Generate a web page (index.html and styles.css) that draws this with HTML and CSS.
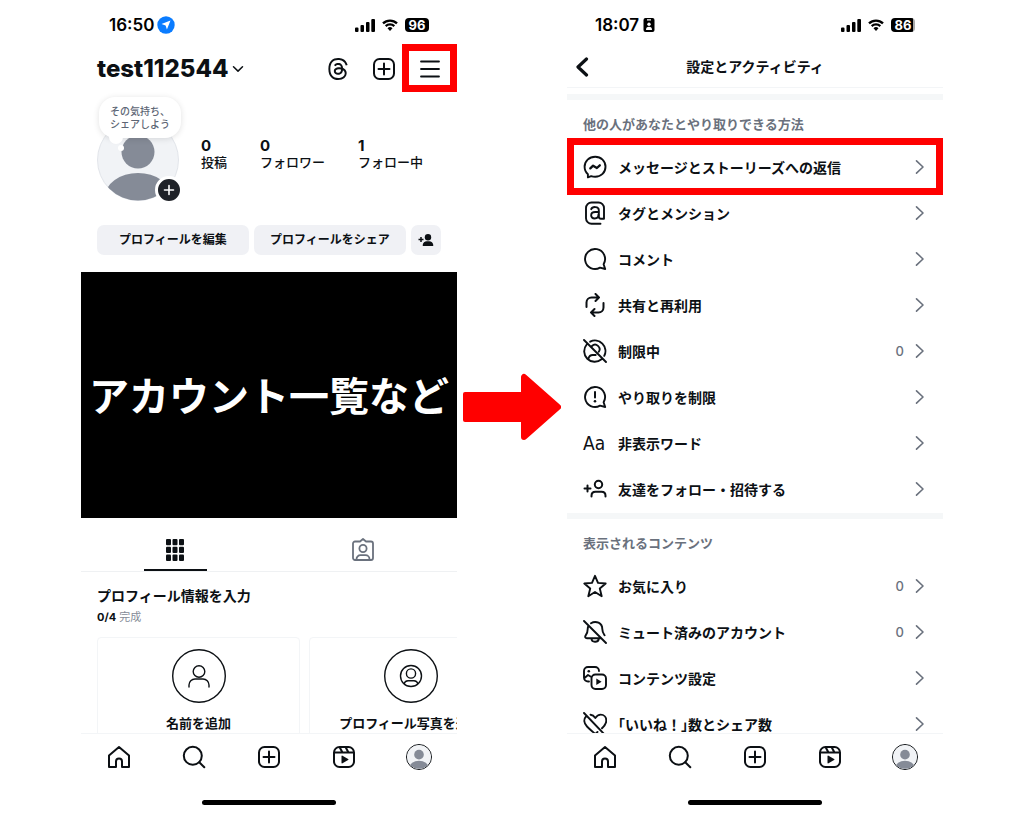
FILE: index.html
```html
<!DOCTYPE html>
<html lang="ja">
<head>
    <meta charset="UTF-8">
    <meta name="viewport" content="width=device-width, initial-scale=1.0">
    <title>設定とアクティビティ</title>
    <link rel="stylesheet" href="styles.css">
</head>
<body>
    <svg class="sprite" aria-hidden="true">
        <symbol id="signal" viewBox="0 0 20 13"><path fill="currentColor" d="M0 9.5a1 1 0 0 1 1-1h1.5a1 1 0 0 1 1 1V12a1 1 0 0 1-1 1H1a1 1 0 0 1-1-1zM5.500 7a1 1 0 0 1 1-1H8a1 1 0 0 1 1 1v5a1 1 0 0 1-1 1H6.500a1 1 0 0 1-1-1zM11 4a1 1 0 0 1 1-1h1.500a1 1 0 0 1 1 1v8a1 1 0 0 1-1 1H12a1 1 0 0 1-1-1zM16.300 1a1 1 0 0 1 1-1H19a1 1 0 0 1 1 1v11a1 1 0 0 1-1 1h-1.700a1 1 0 0 1-1-1z"/></symbol>
        <symbol id="wifi" viewBox="0 0 16 12"><g fill="none" stroke="currentColor" stroke-width="2.300"><path d="M1 4.400a10 10 0 0 1 14 0M3.700 7.200a6.200 6.200 0 0 1 8.600 0"/></g><path fill="currentColor" d="M8 11.900 5.500 9.300a3.600 3.600 0 0 1 5 0z"/></symbol>
        <symbol id="plus-box" viewBox="0 0 24 24"><g fill="none" stroke="currentColor" stroke-width="2" stroke-linecap="round"><rect x="2" y="2" width="20" height="20" rx="5.500"/><path d="M12 6.500v11M6.500 12h11"/></g></symbol>
        <symbol id="home" viewBox="0 0 24 24"><path fill="none" stroke="currentColor" stroke-width="2" stroke-linejoin="round" d="M9 22v-5.500a3 3 0 0 1 6 0V22h7V10.500L12 2 2 10.500V22z"/></symbol>
        <symbol id="search" viewBox="0 0 24 24"><g fill="none" stroke="currentColor" stroke-width="2" stroke-linecap="round"><circle cx="10.800" cy="10.800" r="9"/><path d="m17.300 17.300 5 5"/></g></symbol>
        <symbol id="reels" viewBox="0 0 24 24"><g fill="none" stroke="currentColor" stroke-width="2" stroke-linejoin="round"><rect x="2" y="2" width="20" height="20" rx="5.500"/><path d="M2 7.500h20M7.500 2l3 5.500M13.500 2l3 5.500"/></g><path fill="currentColor" d="M9.500 11.300v6.400a.7.7 0 0 0 1 .6l5.600-3.200a.7.7 0 0 0 0-1.200l-5.600-3.200a.7.7 0 0 0-1 .6z"/></symbol>
        <symbol id="avatar" viewBox="0 0 82 82"><clipPath id="avatar-clip"><circle cx="41" cy="41" r="40.500"/></clipPath><circle cx="41" cy="41" r="40.500" fill="#f1f3f6" stroke="#e2e5ea"/><g fill="#858b97" clip-path="url(#avatar-clip)"><circle cx="41" cy="33" r="16.500"/><ellipse cx="41" cy="78" rx="33" ry="24"/></g></symbol>
        <symbol id="chevron" viewBox="0 0 10 16"><path fill="none" stroke="currentColor" stroke-width="1.600" stroke-linecap="round" stroke-linejoin="round" d="m1.500 1.800 6.500 6.200-6.500 6.200"/></symbol>
    </svg>

    <main class="guide">
        <section class="phone">
            <div class="status">
                <span class="clock">16:50</span>
                <svg class="location" viewBox="0 0 18 18"><circle cx="9" cy="9" r="8.700" fill="#0a7cff"/><path fill="#fff" d="m13.500 4.500-3.600 9-1.300-4.100-4.100-1.300z"/></svg>
                <svg class="signal"><use href="#signal"/></svg>
                <svg class="wifi"><use href="#wifi"/></svg>
                <span class="battery">96</span>
            </div>
            <header class="profile-bar">
                <h1 class="username">test112544</h1>
                <svg class="down" viewBox="0 0 12 8"><path fill="none" stroke="currentColor" stroke-width="1.500" stroke-linecap="round" stroke-linejoin="round" d="m1.500 1.800 4.500 4.300 4.500-4.300"/></svg>
                <button class="icon-button" aria-label="Threads"><svg class="threads" viewBox="0 0 16 16"><path fill="currentColor" d="M6.321 6.016c-.27-.18-1.166-.802-1.166-.802.756-1.081 1.753-1.502 3.132-1.502.975 0 1.803.327 2.394.948s.928 1.509 1.005 2.644q.492.207.905.484c1.109.745 1.719 1.860 1.719 3.137 0 2.716-2.226 5.075-6.256 5.075C4.594 16 1 13.987 1 7.994 1 2.034 4.482 0 8.044 0 9.690 0 13.550.243 15 5.036l-1.360.353C12.516 1.974 10.163 1.430 8.006 1.430c-3.565 0-5.582 2.171-5.582 6.790 0 4.143 2.254 6.343 5.630 6.343 2.777 0 4.847-1.443 4.847-3.556 0-1.438-1.208-2.127-1.270-2.127-.236 1.234-.868 3.310-3.644 3.310-1.618 0-3.013-1.118-3.013-2.582 0-2.090 1.984-2.847 3.550-2.847.586 0 1.294.040 1.663.114 0-.637-.540-1.728-1.900-1.728-1.250 0-1.566.405-1.967.868ZM8.716 8.190c-2.040 0-2.304.870-2.304 1.416 0 .878 1.043 1.168 1.600 1.168 1.020 0 2.067-.282 2.232-2.423a6.200 6.200 0 0 0-1.528-.161"/></svg></button>
                <button class="icon-button" aria-label="作成"><svg class="icon"><use href="#plus-box"/></svg></button>
                <button class="icon-button menu" aria-label="メニュー"><svg class="icon" viewBox="0 0 24 24"><path fill="none" stroke="currentColor" stroke-width="1.800" stroke-linecap="round" d="M3 4.500h18M3 12h18M3 19.500h18"/></svg></button>
            </header>

            <div class="profile">
                <div class="summary">
                    <div class="photo">
                        <svg class="avatar"><use href="#avatar"/></svg>
                        <p class="note">その気持ち、<br>シェアしよう</p>
                        <button class="add" aria-label="ストーリーズを追加"><svg viewBox="0 0 12 12"><path stroke="currentColor" stroke-width="1.600" stroke-linecap="round" d="M6 1.500v9M1.500 6h9"/></svg></button>
                    </div>
                    <ul class="stats">
                        <li><b>0</b>投稿</li>
                        <li><b>0</b>フォロワー</li>
                        <li><b>1</b>フォロー中</li>
                    </ul>
                </div>
                <div class="actions">
                    <button class="action">プロフィールを編集</button>
                    <button class="action">プロフィールをシェア</button>
                    <button class="action small" aria-label="友達を探す"><svg viewBox="0 0 16 14"><path fill="currentColor" d="M5.500 13c-.6 0-.9-.4-.8-1 .3-2.300 1.800-3.700 4.200-3.700h2.200c2.400 0 3.900 1.400 4.200 3.700.1.600-.2 1-.8 1z"/><circle cx="10" cy="4.200" r="3.200" fill="currentColor"/><path stroke="currentColor" stroke-width="1.500" d="M3 4v5M.5 6.500h5"/></svg></button>
                </div>
            </div>

            <div class="cover">アカウント一覧など</div>

            <div class="tabs">
                <a class="tab active" href="#" aria-label="投稿"><svg class="icon" viewBox="0 0 24 24"><g fill="currentColor"><rect x="3" y="1" width="5" height="6.300" rx="1"/><rect x="9.500" y="1" width="5" height="6.300" rx="1"/><rect x="16" y="1" width="5" height="6.300" rx="1"/><rect x="3" y="8.800" width="5" height="6.300" rx="1"/><rect x="9.500" y="8.800" width="5" height="6.300" rx="1"/><rect x="16" y="8.800" width="5" height="6.300" rx="1"/><rect x="3" y="16.600" width="5" height="6.300" rx="1"/><rect x="9.500" y="16.600" width="5" height="6.300" rx="1"/><rect x="16" y="16.600" width="5" height="6.300" rx="1"/></g></svg></a>
                <a class="tab" href="#" aria-label="タグ付け"><svg class="icon" viewBox="0 0 24 24"><g fill="none" stroke="currentColor" stroke-width="1.800" stroke-linejoin="round"><path d="M4 3.500h5L12 1l3 2.500h5a2 2 0 0 1 2 2V20a2 2 0 0 1-2 2H4a2 2 0 0 1-2-2V5.500a2 2 0 0 1 2-2z"/><circle cx="12" cy="10.500" r="3.600"/><path d="M5.500 22v-.8a4 4 0 0 1 4-4h5a4 4 0 0 1 4 4v.8"/></g></svg></a>
            </div>

            <div class="setup">
                <h2>プロフィール情報を入力</h2>
                <p class="progress"><b>0/4</b> 完成</p>
                <div class="cards">
                    <article class="card">
                        <svg class="ring" viewBox="0 0 54 54"><g fill="none" stroke="currentColor" stroke-width="1.400" stroke-linecap="round"><circle cx="27" cy="27" r="26.300"/><circle cx="27" cy="22.500" r="5.800"/><path d="M17 38v-2a6 6 0 0 1 6-6h8a6 6 0 0 1 6 6v2"/></g></svg>
                        <h3>名前を追加</h3>
                    </article>
                    <article class="card">
                        <svg class="ring" viewBox="0 0 54 54"><g fill="none" stroke="currentColor" stroke-width="1.400"><circle cx="27" cy="27" r="26.300"/><circle cx="27" cy="27" r="10.500"/><circle cx="27" cy="24.500" r="4.600"/><path d="M20 35c.6-2.300 2-3.300 4-3.300h6c2 0 3.400 1 4 3.300"/></g></svg>
                        <h3>プロフィール写真を追加</h3>
                    </article>
                </div>
            </div>

            <nav class="tabbar">
                <a href="#" aria-label="ホーム"><svg class="icon"><use href="#home"/></svg></a>
                <a href="#" aria-label="検索"><svg class="icon"><use href="#search"/></svg></a>
                <a href="#" aria-label="作成"><svg class="icon"><use href="#plus-box"/></svg></a>
                <a href="#" aria-label="リール"><svg class="icon"><use href="#reels"/></svg></a>
                <a href="#" aria-label="プロフィール"><svg class="me"><use href="#avatar"/></svg></a>
            </nav>
        </section>

        <svg class="arrow" viewBox="0 0 98 68"><path fill="#f00" stroke="#f00" stroke-width="6" stroke-linejoin="round" d="M61 4v60l34-30z"/><rect y="19" width="64" height="30" rx="2" fill="#f00"/></svg>

        <section class="phone">
            <div class="status">
                <span class="clock">18:07</span>
                <svg class="badge" viewBox="0 0 12 16"><rect x=".5" y="1" width="11" height="14" rx="2" fill="currentColor"/><path fill="#fff" d="M4 2.200h4v1.200H4zM3 13c0-2.200 1-3.300 3-3.300s3 1.100 3 3.300z"/><circle cx="6" cy="7.200" r="1.700" fill="#fff"/></svg>
                <svg class="signal"><use href="#signal"/></svg>
                <svg class="wifi"><use href="#wifi"/></svg>
                <span class="battery part">86</span>
            </div>
            <header class="settings-bar">
                <button class="back" aria-label="戻る"><svg viewBox="0 0 14 20"><path fill="none" stroke="currentColor" stroke-width="3.200" stroke-linecap="round" stroke-linejoin="round" d="m11.500 2-8.500 8 8.500 8"/></svg></button>
                <h1>設定とアクティビティ</h1>
            </header>

            <div class="settings">
                <section class="group">
                    <h2>他の人があなたとやり取りできる方法</h2>
                    <a class="row marked" href="#">
                        <svg class="icon" viewBox="0 0 24 24"><g fill="none" stroke="currentColor" stroke-width="1.900" stroke-linejoin="round" stroke-linecap="round"><path d="M12.200 1.800C6.200 1.800 1.600 6 1.600 11.800c0 3 1.200 5.600 3.300 7.400v3.200l3.300-1.300c1.200.4 2.600.6 4 .6 5.900 0 10.300-4.200 10.300-9.900S18.100 1.800 12.200 1.800z"/><path stroke-width="2.300" d="m7.300 13.400 2.800-2.700 3.800 2.300 2.900-2.700"/></g></svg>
                        <span class="name">メッセージとストーリーズへの返信</span>
                        <svg class="chevron"><use href="#chevron"/></svg>
                    </a>
                    <a class="row" href="#">
                        <svg class="icon" viewBox="0 0 24 24"><g fill="none" stroke="currentColor" stroke-width="1.900" stroke-linecap="round" stroke-linejoin="round"><path d="M17.500 22.800H8.500A5.500 5.500 0 0 1 3 17.300V7a5.500 5.500 0 0 1 5.500-5.500h7A5.500 5.500 0 0 1 21 7v10.700h-3c-1.400 0-2.200-.8-2.200-2.200V9c0-3.600-6.400-3.900-7.600-.8"/><path d="M15.500 11h-3.300c-5.300 0-5.300 6.500-.5 6.500 2.300 0 3.800-1.500 3.800-3.700"/></g></svg>
                        <span class="name">タグとメンション</span>
                        <svg class="chevron"><use href="#chevron"/></svg>
                    </a>
                    <a class="row" href="#">
                        <svg class="icon" viewBox="0 0 24 24"><path fill="none" stroke="currentColor" stroke-width="1.900" stroke-linejoin="round" d="M20.600 17.200a10 10 0 1 0-3.600 3.500l5.200 1.300z"/></svg>
                        <span class="name">コメント</span>
                        <svg class="chevron"><use href="#chevron"/></svg>
                    </a>
                    <a class="row" href="#">
                        <svg class="icon" viewBox="0 0 24 24"><g fill="none" stroke="currentColor" stroke-width="2" stroke-linecap="round" stroke-linejoin="round"><path d="M3.500 14V9.500a5 5 0 0 1 5-5H16M12.500 1 16 4.500 12.500 8M20.500 10v4.500a5 5 0 0 1-5 5H8M11.500 23 8 19.500l3.500-3.500"/></g></svg>
                        <span class="name">共有と再利用</span>
                        <svg class="chevron"><use href="#chevron"/></svg>
                    </a>
                    <a class="row" href="#">
                        <svg class="icon" viewBox="0 0 24 24"><g fill="none" stroke="currentColor" stroke-width="1.900" stroke-linecap="round"><path d="M1 1l22 22M7.200 2.700A10.500 10.500 0 0 1 21.300 16.800M18.500 20.300A10.500 10.500 0 0 1 3.700 5.500M9 7a4.500 4.500 0 0 1 6.800 5.800M5.500 19.500c.6-2.500 2-3.500 4.200-3.500h3"/></g></svg>
                        <span class="name">制限中</span>
                        <span class="count">0</span>
                        <svg class="chevron"><use href="#chevron"/></svg>
                    </a>
                    <a class="row" href="#">
                        <svg class="icon" viewBox="0 0 24 24"><path fill="none" stroke="currentColor" stroke-width="1.900" stroke-linejoin="round" d="M20.600 17.200a10 10 0 1 0-3.600 3.500l5.200 1.300z"/><path stroke="currentColor" stroke-width="2" stroke-linecap="round" d="M12 7v5.500"/><circle cx="12" cy="16.300" r="1.300" fill="currentColor"/></svg>
                        <span class="name">やり取りを制限</span>
                        <svg class="chevron"><use href="#chevron"/></svg>
                    </a>
                    <a class="row" href="#">
                        <span class="icon letters">Aa</span>
                        <span class="name">非表示ワード</span>
                        <svg class="chevron"><use href="#chevron"/></svg>
                    </a>
                    <a class="row" href="#">
                        <svg class="icon" viewBox="0 0 24 24"><g fill="none" stroke="currentColor" stroke-width="2" stroke-linecap="round"><circle cx="15.500" cy="7.500" r="3.700"/><path d="M8.500 19.500v-.8c0-2.400 1.600-4 4-4h6c2.400 0 4 1.600 4 4v.8M4.500 8.500v6M1.500 11.500h6"/></g></svg>
                        <span class="name">友達をフォロー・招待する</span>
                        <svg class="chevron"><use href="#chevron"/></svg>
                    </a>
                </section>

                <section class="group">
                    <h2>表示されるコンテンツ</h2>
                    <a class="row" href="#">
                        <svg class="icon" viewBox="0 0 24 24"><path fill="none" stroke="currentColor" stroke-width="1.900" stroke-linejoin="round" d="m12 1.800 3 7.100 7.700.6-5.900 5 1.900 7.700L12 18l-6.700 4.200 1.900-7.700-5.900-5 7.700-.6z"/></svg>
                        <span class="name">お気に入り</span>
                        <span class="count">0</span>
                        <svg class="chevron"><use href="#chevron"/></svg>
                    </a>
                    <a class="row" href="#">
                        <svg class="icon" viewBox="0 0 24 24"><g fill="none" stroke="currentColor" stroke-width="1.900" stroke-linecap="round" stroke-linejoin="round"><path d="m1 1 22 22M8 3.200C13 .2 19.300 3 19.300 9c0 3.200 1.200 4.700 2.300 6.300M17 18.200H4c-1.800 0-2.300-1.500-1.300-2.800 1.300-1.700 2-3.400 2-6.400 0-1 .2-1.900.5-2.700M8.500 19c.3 3.500 6.500 3.800 7.200.3"/></g></svg>
                        <span class="name">ミュート済みのアカウント</span>
                        <span class="count">0</span>
                        <svg class="chevron"><use href="#chevron"/></svg>
                    </a>
                    <a class="row" href="#">
                        <svg class="icon" viewBox="0 0 24 24"><g fill="none" stroke="currentColor" stroke-width="1.900" stroke-linecap="round" stroke-linejoin="round"><path d="M6 15.500H5A4 4 0 0 1 1 11.500V5a4 4 0 0 1 4-4h7a4 4 0 0 1 4 4M1.500 12l3.500-3 2.500 1.500"/><rect x="8.500" y="8.500" width="14.500" height="14.500" rx="4"/></g><circle cx="5.800" cy="5.300" r="1.300" fill="currentColor"/><path fill="currentColor" d="M13.300 12.600v6.300l5.300-3.150z"/></svg>
                        <span class="name">コンテンツ設定</span>
                        <svg class="chevron"><use href="#chevron"/></svg>
                    </a>
                    <a class="row" href="#">
                        <svg class="icon" viewBox="0 0 24 24"><g fill="none" stroke="currentColor" stroke-width="1.900" stroke-linecap="round" stroke-linejoin="round"><path d="m1 1 21 22M7.500 2.700c2 .2 3.500 1.300 4.800 3.300 1.500-2.300 3.300-3.400 5.400-3.400 3.200 0 5.600 2.600 5.600 6 0 3.300-2 5.500-4.300 7.700M3.200 4.200C.3 7.500 1 11.500 4 14.500c2.500 2.600 5.600 5 8.300 7.500l2.200-2"/></g></svg>
                        <span class="name"><span class="bracket">「</span>いいね！<span class="bracket">」</span>数とシェア数</span>
                        <svg class="chevron"><use href="#chevron"/></svg>
                    </a>
                </section>
            </div>

            <nav class="tabbar">
                <a href="#" aria-label="ホーム"><svg class="icon"><use href="#home"/></svg></a>
                <a href="#" aria-label="検索"><svg class="icon"><use href="#search"/></svg></a>
                <a href="#" aria-label="作成"><svg class="icon"><use href="#plus-box"/></svg></a>
                <a href="#" aria-label="リール"><svg class="icon"><use href="#reels"/></svg></a>
                <a href="#" aria-label="プロフィール"><svg class="me"><use href="#avatar"/></svg></a>
            </nav>
        </section>
    </main>
</body>
</html>
```

FILE: styles.css
```css
* {
    box-sizing: border-box;
}

body {
    margin: 0;
    background-color: #fff;
    color: #0c1014;
    font-family: "Inter", "Noto Sans CJK JP", sans-serif;
    font-size: 13px;
    line-height: 18px;
}

h1, h2, h3, p, ul {
    margin: 0;
    padding: 0;
}

a {
    color: inherit;
    text-decoration: none;
}

button {
    display: flex;
    align-items: center;
    justify-content: center;
    padding: 0;
    border: none;
    background: none;
    color: inherit;
    font: inherit;
}

svg {
    display: block;
    flex: none;
}

.sprite {
    position: absolute;
    width: 0;
    height: 0;
}

.guide {
    display: grid;
    grid-template-columns: minmax(0, 1fr) 98px minmax(0, 1fr);
    gap: 6px;
    align-items: center;
    height: 100vh;
    padding: 0 81px;
}

.phone {
    display: flex;
    flex-direction: column;
    height: 100vh;
    overflow: hidden;
}

.arrow {
    width: 98px;
    height: 68px;
}

.icon {
    width: 24px;
    height: 24px;
}

/* status bar */
.status {
    display: flex;
    align-items: center;
    flex: none;
    height: 48px;
    padding: 2px 28px 0;
    color: #000;
}

.clock {
    font-size: 17px;
    font-weight: 600;
}

.location {
    width: 18px;
    height: 18px;
    margin-left: 3px;
}

.badge {
    width: 12px;
    height: 16px;
    margin-left: 4px;
}

.signal {
    width: 20px;
    height: 13px;
    margin-left: auto;
}

.wifi {
    width: 16px;
    height: 12px;
    margin: 0 7px;
}

.battery {
    width: 24px;
    border-radius: 4px;
    background-color: #000;
    color: #fff;
    font-size: 13px;
    font-weight: 700;
    line-height: 14px;
    text-align: center;
}

.battery.part {
    background: linear-gradient(to right, #000 92%, #aaa 92%);
}

/* profile screen */
.profile-bar {
    display: flex;
    align-items: center;
    flex: none;
    height: 42px;
    padding: 0 4px 0 16px;
}

.username {
    font-size: 24px;
    font-weight: 800;
    line-height: 28px;
}

.down {
    width: 12px;
    height: 8px;
    margin: 0 auto 0 4px;
}

.icon-button {
    width: 46px;
    height: 42px;
}

.threads {
    width: 22px;
    height: 22px;
}

.menu {
    position: relative;
}

.menu::after {
    content: "";
    position: absolute;
    inset: -4px -4px -2px -5px;
    border: 7px solid #f00;
}

.profile {
    flex: none;
    padding: 29px 16px 17px;
}

.summary {
    display: flex;
    gap: 22px;
}

.photo {
    position: relative;
}

.avatar {
    width: 82px;
    height: 82px;
}

.note {
    position: absolute;
    top: -22px;
    left: 2px;
    width: 82px;
    padding: 8px 0 7px;
    border-radius: 16px;
    background-color: #fff;
    box-shadow: 0 1px 6px rgba(0, 0, 0, 0.12);
    color: #5d6675;
    font-size: 10px;
    font-weight: 500;
    line-height: 13px;
    text-align: center;
}

.note::before,
.note::after {
    content: "";
    position: absolute;
    border-radius: 50%;
    background-color: #fff;
}

.note::before {
    top: 33px;
    left: 10px;
    width: 14px;
    height: 14px;
}

.note::after {
    top: 48px;
    left: 19px;
    width: 6px;
    height: 6px;
}

.add {
    position: absolute;
    right: -4px;
    bottom: -3px;
    width: 28px;
    height: 28px;
    border: 3px solid #fff;
    border-radius: 50%;
    background-color: #1f2228;
    color: #fff;
}

.add svg {
    width: 12px;
    height: 12px;
}

.stats {
    display: flex;
    gap: 33px;
    padding-top: 18px;
    font-weight: 500;
    line-height: 17px;
    list-style: none;
}

.stats b {
    display: block;
    font-size: 15px;
}

.actions {
    display: flex;
    gap: 5px;
    margin-top: 24px;
}

.action {
    flex: 1;
    height: 30px;
    border-radius: 7px;
    background-color: #f0f1f5;
    font-size: 12px;
    font-weight: 700;
    white-space: nowrap;
}

.action.small {
    flex: 0 0 30px;
}

.action svg {
    width: 16px;
    height: 14px;
}

.cover {
    display: flex;
    align-items: center;
    justify-content: center;
    flex: none;
    height: 246px;
    padding-top: 4px;
    background-color: #000;
    color: #fff;
    font-size: 40px;
    font-weight: 700;
    line-height: 48px;
    white-space: nowrap;
}

.tabs {
    display: flex;
    flex: none;
    height: 54px;
    border-bottom: 1px solid #eff1f3;
    color: #6a717d;
}

.tab {
    display: flex;
    align-items: center;
    justify-content: center;
    flex: 1;
    position: relative;
    padding-top: 10px;
}

.tab.active {
    color: #0c1014;
}

.tab.active::after {
    content: "";
    position: absolute;
    bottom: 0;
    width: 63px;
    height: 2px;
    background-color: #0c1014;
}

.setup {
    flex: 1;
    min-height: 0;
    padding: 14px 0 0 16px;
    overflow: hidden;
}

.setup h2 {
    font-size: 14px;
    line-height: 20px;
}

.progress {
    margin-top: 2px;
    color: #858b97;
    font-size: 11px;
}

.progress b {
    color: #0c1014;
}

.cards {
    display: flex;
    gap: 9px;
    margin-top: 11px;
}

.card {
    display: flex;
    flex-direction: column;
    align-items: center;
    flex: none;
    gap: 11px;
    width: 203px;
    height: 200px;
    padding-top: 11px;
    border: 1px solid #f3f5f7;
    border-radius: 4px;
}

.card h3 {
    font-size: 13px;
    white-space: nowrap;
}

.ring {
    width: 54px;
    height: 54px;
}

/* settings screen */
.settings-bar {
    display: grid;
    grid-template-columns: 30px 1fr 30px;
    align-items: center;
    flex: none;
    height: 40px;
    padding-bottom: 2px;
    border-bottom: 1px solid #f3f5f7;
}

.settings-bar h1 {
    font-size: 14px;
    text-align: center;
}

.back svg {
    width: 14px;
    height: 20px;
}

.settings {
    flex: 1;
    min-height: 0;
    padding-top: 6px;
    overflow: hidden;
}

.group {
    padding: 4px 0 1px;
    border-top: 6px solid #f5f7f8;
}

.group h2 {
    padding-left: 16px;
    color: #6a717d;
    font-size: 13px;
    font-weight: 600;
    line-height: 40px;
}

.row {
    display: flex;
    align-items: center;
    gap: 11px;
    height: 46px;
    padding: 0 18px 0 16px;
    font-size: 14px;
    font-weight: 600;
}

.name {
    flex: 1;
    font-family: "Noto Sans CJK JP", sans-serif;
}

.bracket {
    font-feature-settings: "halt";
}

.letters {
    font-family: "DejaVu Sans Condensed", "Roboto", sans-serif;
    font-size: 19px;
    font-weight: 400;
    line-height: 24px;
}

.count {
    color: #6a717d;
    font-size: 13px;
    font-weight: 500;
}

.chevron {
    width: 10px;
    height: 16px;
    color: #6a717d;
}

.marked {
    position: relative;
}

.marked::after {
    content: "";
    position: absolute;
    inset: -6px 0 -5px;
    border: 7px solid #f00;
}

/* bottom navigation */
.tabbar {
    display: flex;
    flex: none;
    flex-wrap: wrap;
    align-content: flex-start;
    height: 80px;
    border-top: 1px solid #f3f5f7;
}

.tabbar a {
    display: flex;
    align-items: center;
    justify-content: center;
    flex: 1;
    height: 46px;
}

.tabbar::after {
    content: "";
    flex: 0 0 134px;
    height: 5px;
    margin: 20px calc(50% - 67px) 0;
    border-radius: 3px;
    background-color: #000;
}

.me {
    width: 26px;
    height: 26px;
    border: 1px solid #0c1014;
    border-radius: 50%;
}
```
